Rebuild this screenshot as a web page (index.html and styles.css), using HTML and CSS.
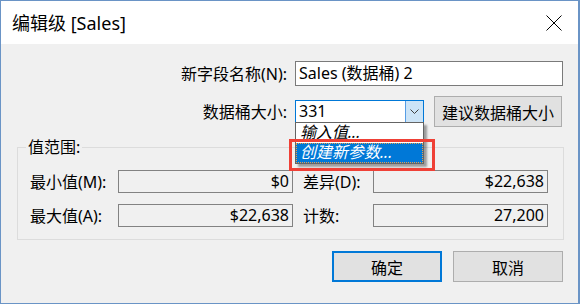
FILE: index.html
```html
<!DOCTYPE html>
<html lang="zh">
<head>
<meta charset="utf-8">
<link rel="stylesheet" href="styles.css">
</head>
<body>
<div class="window">
  <div class="titlebar">
    <span class="title">编辑级 [Sales]</span>
    <svg class="close" width="16" height="16" viewBox="0 0 16 16"><path d="M0.5 0.5 L15.5 15.5 M15.5 0.5 L0.5 15.5" stroke="#000" stroke-width="1" fill="none"/></svg>
  </div>
  <div class="content">
    <div class="form">
      <label class="lbl">新字段名称(N):</label>
      <div class="textbox">Sales (数据桶) 2</div>
      <label class="lbl">数据桶大小:</label>
      <div class="row2">
        <div class="combo">
          <span class="combo-val">331</span>
          <span class="combo-btn"><svg width="9" height="5" viewBox="0 0 9 5"><path d="M0.5 0.5 L4.5 4.5 L8.5 0.5" stroke="#404040" fill="none" stroke-width="1"/></svg></span>
        </div>
        <button class="btn suggest">建议数据桶大小</button>
      </div>
    </div>
    <fieldset class="group">
      <legend>值范围:</legend>
      <div class="grid">
        <span class="glbl">最小值(M):</span>
        <div class="ro">$0</div>
        <span class="glbl second">差异(D):</span>
        <div class="ro">$22,638</div>
        <span class="glbl">最大值(A):</span>
        <div class="ro">$22,638</div>
        <span class="glbl second">计数:</span>
        <div class="ro">27,200</div>
      </div>
    </fieldset>
    <div class="footer">
      <button class="btn ok">确定</button>
      <button class="btn">取消</button>
    </div>
  </div>
  <div class="droplist">
    <div class="item">输入值...</div>
    <div class="item sel">创建新参数...</div>
  </div>
  <div class="redbox"></div>
</div>
</body>
</html>
```
FILE: styles.css
```css
* { box-sizing: border-box; }
html, body { margin: 0; padding: 0; }
body {
  font-family: "Noto Sans", "Noto Sans CJK SC", sans-serif;
  font-size: 16px;
  color: #000;
  background: #f0f0f0;
}
.window {
  position: relative;
  width: 580px;
  height: 304px;
  border: 1px solid #6a94c6;
  border-right-width: 2px;
  background: #f0f0f0;
}
.titlebar {
  height: 43px;
  background: #fff;
  display: flex;
  align-items: center;
  justify-content: space-between;
  padding: 0 16px 0 11px;
}
.title {
  font-size: 18px;
  line-height: 20px;
  margin-top: 1px;
}
.close { display: block; }
.content {
  padding-top: 17px;
}
.form {
  display: grid;
  grid-template-columns: 286px auto;
  column-gap: 8px;
  row-gap: 10px;
  align-items: center;
}
.lbl {
  text-align: right;
  line-height: 20px;
}
.textbox {
  width: 268px;
  height: 25px;
  background: #fff;
  border: 1px solid #7a7a7a;
  padding: 0 3px;
  line-height: 23px;
}
.row2 {
  display: flex;
  align-items: center;
}
.combo {
  width: 129px;
  height: 23px;
  border: 1px solid #0078d7;
  background: #fff;
  display: flex;
  margin-top: -1px;
}
.combo-val {
  flex: 1;
  padding-left: 3px;
  line-height: 21px;
}
.combo-btn {
  width: 18px;
  background: #cce4f7;
  border-left: 1px solid #569de5;
  display: flex;
  align-items: center;
  justify-content: center;
}
.btn {
  font-family: inherit;
  font-size: 16px;
  color: #000;
  background: #e1e1e1;
  border: 1px solid #adadad;
  padding: 0;
  margin: 0;
}
.suggest {
  width: 128px;
  height: 31px;
  margin-left: 10px;
}
.group {
  margin: 13px 0 0 16px;
  width: 547px;
  border: 1px solid #dcdcdc;
  padding: 16px 14px 12px 12px;
  min-width: 0;
}
.group legend {
  padding: 0 2px;
  margin-left: -4px;
  line-height: 14px;
}
.grid {
  display: grid;
  grid-template-columns: 88px 175px 80px 175px;
  row-gap: 11px;
  align-items: center;
}
.glbl { line-height: 20px; }
.glbl.second { padding-left: 10px; }
.ro {
  height: 23px;
  border: 1px solid #828282;
  background: #f0f0f0;
  text-align: right;
  padding-right: 3px;
  line-height: 21px;
}
.footer {
  display: flex;
  justify-content: flex-end;
  gap: 11px;
  margin-top: 11px;
  padding-right: 15px;
}
.footer .btn {
  width: 110px;
  height: 31px;
}
.footer .ok {
  border: 2px solid #0078d7;
}
.droplist {
  position: absolute;
  left: 294px;
  top: 121px;
  width: 129px;
  border: 1px solid #646464;
  background: #fff;
  box-shadow: 3px 3px 2px rgba(0,0,0,0.35);
}
.item {
  height: 20px;
  line-height: 19px;
  padding-left: 4px;
  font-style: italic;
}
.item.sel {
  background: #0078d7;
  color: #fff;
  outline: 1px dotted #e8a050;
  outline-offset: -1px;
}
.redbox {
  position: absolute;
  left: 288px;
  top: 138px;
  width: 146px;
  height: 32px;
  border: 3px solid #ef4036;
}
```
